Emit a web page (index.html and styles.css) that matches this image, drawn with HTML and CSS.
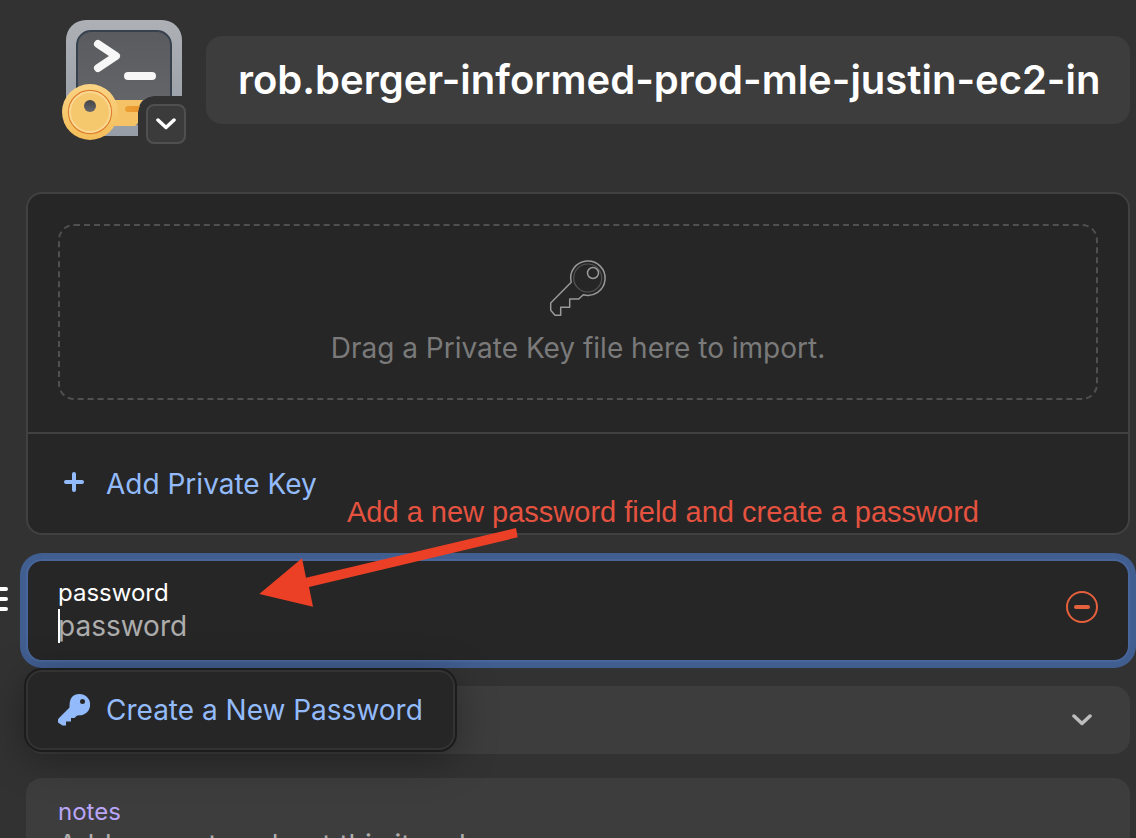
FILE: index.html
```html
<!DOCTYPE html>
<html lang="en">
<head>
<meta charset="utf-8">
<meta name="viewport" content="width=device-width, initial-scale=1">
<title>Edit SSH Key</title>
<link rel="stylesheet" href="styles.css">
</head>
<body>
<main class="editor">
  <header class="item-header">
    <div class="item-icon">
      <svg class="item-art" viewBox="0 0 124 124" aria-hidden="true">
        <defs>
          <linearGradient id="frame" x1="0" y1="0" x2="0" y2="1"><stop offset="0" stop-color="#adb0b5"/><stop offset="1" stop-color="#969da6"/></linearGradient>
          <linearGradient id="screen" x1="0" y1="0" x2="0" y2="1"><stop offset="0" stop-color="#5a5b5e"/><stop offset="1" stop-color="#66686c"/></linearGradient>
          <linearGradient id="gold" x1="0" y1="0" x2="0" y2="1"><stop offset="0" stop-color="#fad486"/><stop offset="1" stop-color="#f4bd58"/></linearGradient>
          <linearGradient id="slot" x1="0" y1="0" x2="1" y2="0"><stop offset="0" stop-color="#eda136"/><stop offset="1" stop-color="#e9952c"/></linearGradient>
          <linearGradient id="hole" x1="0" y1="0" x2="0" y2="1"><stop offset="0" stop-color="#444548"/><stop offset="1" stop-color="#66676a"/></linearGradient>
        </defs>
        <path d="M24 0H100a20 20 0 0 1 20 20V76H92a16 16 0 0 0-16 16V116H24A20 20 0 0 1 4 96V20A20 20 0 0 1 24 0Z" fill="url(#frame)"/>
        <path d="M15 96V25a14 14 0 0 1 14-14H95a14 14 0 0 1 14 14V76H92a16 16 0 0 0-16 16V105H29" fill="url(#screen)"/>
        <path d="M15 90V25a14 14 0 0 1 14-14H95a14 14 0 0 1 14 14V76" fill="none" stroke="#36414d" stroke-width="2"/>
        <path d="M36 24 54 36 36 48" fill="none" stroke="#f7f7f7" stroke-width="8" stroke-linecap="round" stroke-linejoin="round"/>
        <path d="M66 56H90" stroke="#f7f7f7" stroke-width="8" stroke-linecap="round"/>
        <path d="M48 80H81Q76 85 76 93V103L73 106H48Z" fill="#f5c366"/>
        <path d="M66 86H78Q76 89 76 92H66a3 3 0 0 1 0-6Z" fill="url(#slot)"/>
        <circle cx="28" cy="92" r="28" fill="url(#gold)"/>
        <circle cx="28" cy="92" r="21.500" fill="#f6c86e" stroke="#df802e" stroke-width="1.300"/>
        <circle cx="28" cy="92" r="20" fill="none" stroke="#fbd894" stroke-width="1.800"/>
        <circle cx="28" cy="86" r="6" fill="url(#hole)"/>
      </svg>
      <button class="icon-menu" type="button" aria-label="Change icon">
        <svg width="20" height="12" viewBox="0 0 20 12" aria-hidden="true"><path d="M2 2 10 9.500 18 2" fill="none" stroke="#fff" stroke-width="3.500" stroke-linecap="round" stroke-linejoin="round"/></svg>
      </button>
    </div>
    <input class="item-title" type="text" aria-label="Title" value="rob.berger-informed-prod-mle-justin-ec2-in">
  </header>

  <section class="key-card">
    <div class="drop-area">
      <div class="drop-zone">
        <svg width="60" height="60" viewBox="0 0 60 60" aria-hidden="true" fill="none">
          <path d="M23.200 24.300A17.200 17.200 0 1 1 35.300 36.700L30.700 41H21.700V49.300H12.700V57.300H7L2.700 52.300V45Z" stroke="#999" stroke-width="1.500" stroke-linejoin="round"/>
          <circle cx="39.700" cy="20" r="14" stroke="#555" stroke-width="1.200"/>
          <circle cx="45" cy="15" r="5.500" stroke="#999" stroke-width="1.500"/>
        </svg>
        <p class="drop-text">Drag a Private Key file here to import.</p>
      </div>
    </div>
    <button class="add-key" type="button">
      <svg class="action-icon" viewBox="0 0 32 32" aria-hidden="true"><path d="M16 6V22M8 14H24" stroke="#93bbfb" stroke-width="4" stroke-linecap="round"/></svg>
      <span>Add Private Key</span>
    </button>
    <div class="annotation">
      <span>Add a new password field and create a password</span>
      <svg class="arrow" width="262" height="82" viewBox="0 0 262 82" aria-hidden="true"><path d="M2.300 68 45 32.300 49 51.700 259 2 260.700 11.300 52 61 56 80.700Z" fill="#ec4026"/></svg>
    </div>
  </section>

  <section class="password-field">
    <svg class="drag-handle" width="8" height="24" viewBox="0 0 8 24" aria-hidden="true"><path d="M-8 2H6M-8 12H6M-8 22H6" stroke="#fff" stroke-width="4" stroke-linecap="round"/></svg>
    <div class="password-text">
      <label class="field-label" for="password">password</label>
      <div class="value-wrap">
        <input class="field-value" id="password" type="text" placeholder="password">
        <span class="caret"></span>
      </div>
    </div>
    <button class="remove" type="button" aria-label="Remove field">
      <svg width="32" height="32" viewBox="0 0 32 32" aria-hidden="true" fill="none" stroke="#e5603c"><circle cx="16" cy="16" r="15" stroke-width="2"/><path d="M10 16H22" stroke-width="4" stroke-linecap="round"/></svg>
    </button>
    <button class="suggestion" type="button">
      <svg class="action-icon" viewBox="0 0 32 32" aria-hidden="true"><path fill="#93bbfb" fill-rule="evenodd" d="M21.500 0A10.500 10.500 0 0 1 21.500 21.300Q19 21.300 18.500 22L16.500 24H13V27.500H8V31.500H4.500L0 28.500V25.500L1 24 11.500 13.500Q11 0 21.500 0ZM24.500 5a2.500 2.500 0 1 0 0 5a2.500 2.500 0 1 0 0-5Z"/></svg>
      <span>Create a New Password</span>
    </button>
  </section>

  <button class="add-more" type="button" aria-label="Add more">
    <svg width="20" height="12" viewBox="0 0 20 12" aria-hidden="true"><path d="M2 2 10 9.500 18 2" fill="none" stroke="#bdbdbd" stroke-width="3.500" stroke-linecap="round" stroke-linejoin="round"/></svg>
  </button>

  <section class="notes">
    <label class="notes-label" for="notes">notes</label>
    <textarea class="notes-value" id="notes" rows="2" placeholder="Add any notes about this item here."></textarea>
  </section>
</main>
</body>
</html>
```
FILE: styles.css
```css
* { box-sizing: border-box; }

html, body { height: 100%; }

body {
  margin: 0;
  overflow: hidden;
  background: #323232;
  color: #fff;
  font-family: Inter, "Liberation Sans", sans-serif;
  font-size: 28px;
  line-height: 34px;
}

button, input, textarea {
  margin: 0;
  padding: 0;
  border: 0;
  background: none;
  color: inherit;
  font: inherit;
  outline: none;
}

svg { display: block; flex: none; }

.editor {
  display: flex;
  flex-direction: column;
  gap: 24px;
  padding: 20px 6px 0 26px;
}

.item-header {
  display: flex;
  align-items: flex-start;
  gap: 20px;
  padding-left: 36px;
  margin-bottom: 24px;
}

.item-icon {
  position: relative;
  flex: none;
  width: 124px;
  height: 124px;
}

.item-art { width: 100%; height: 100%; }

.icon-menu {
  position: absolute;
  right: 0;
  bottom: 0;
  display: grid;
  place-items: center;
  width: 40px;
  height: 40px;
  border: 2px solid #505050;
  border-radius: 8px;
  background: #3b3b3b;
}

.item-title {
  flex: 1;
  min-width: 0;
  height: 88px;
  margin-top: 16px;
  padding: 0 24px 2px 32px;
  border-radius: 16px;
  background: #3d3d3d;
  font-size: 40px;
  font-weight: 600;
  line-height: 48px;
}

.key-card {
  position: relative;
  border: 2px solid #414141;
  border-radius: 16px;
  background: #262626;
}

.drop-area {
  padding: 30px 30px 32px;
  border-bottom: 2px solid #414141;
}

.drop-zone {
  display: flex;
  flex-direction: column;
  align-items: center;
  gap: 13px;
  padding: 32px 0 33px;
  border: 2px dashed #505050;
  border-radius: 16px;
}

.drop-text { margin: 0; color: #7a7a7a; }

.add-key {
  display: flex;
  align-items: center;
  gap: 16px;
  width: 100%;
  padding: 33px 30px 32px;
  color: #93bbfb;
  text-align: left;
}

.action-icon { width: 32px; height: 32px; }

.annotation {
  position: absolute;
  left: 319px;
  top: 301px;
  z-index: 2;
  color: #e5523f;
  font-family: "Liberation Sans", Arial, sans-serif;
  font-size: 29px;
  white-space: nowrap;
  pointer-events: none;
}

.arrow {
  position: absolute;
  left: -90px;
  top: 31px;
}

.password-field {
  position: relative;
  display: flex;
  align-items: flex-start;
  padding: 16px 30px 17px;
  border: 2px solid #48669b;
  border-radius: 16px;
  background: #262626;
  box-shadow: 0 0 0 6px #415e90;
}

.drag-handle {
  position: absolute;
  left: -28px;
  top: 26px;
}

.password-text {
  display: flex;
  flex: 1;
  flex-direction: column;
}

.field-label, .notes-label {
  font-size: 24px;
  line-height: 32px;
}

.value-wrap { position: relative; }

.field-value {
  display: block;
  width: 100%;
  height: 34px;
}

.field-value::placeholder, .notes-value::placeholder {
  color: #adadad;
  opacity: 1;
}

.caret {
  position: absolute;
  left: 0;
  top: 0;
  width: 2px;
  height: 34px;
  background: #fff;
}

.remove { margin-top: 14px; }

.suggestion {
  position: absolute;
  left: -2px;
  top: 109px;
  z-index: 1;
  display: flex;
  align-items: center;
  gap: 16px;
  height: 80px;
  padding: 0 30px;
  border: 2px solid #333;
  border-radius: 16px;
  background: #262626;
  box-shadow: 0 0 0 2px #1c1c1c, 0 8px 40px rgba(0, 0, 0, 0.35);
  color: #93bbfb;
  white-space: nowrap;
}

.add-more {
  display: flex;
  align-items: center;
  justify-content: flex-end;
  height: 68px;
  padding: 0 38px;
  border-radius: 16px;
  background: #3d3d3d;
}

.notes {
  display: flex;
  flex-direction: column;
  padding: 18px 32px;
  border-radius: 16px;
  background: #3d3d3d;
}

.notes-label { color: #b9a5f7; }

.notes-value {
  width: 100%;
  resize: none;
}
```
